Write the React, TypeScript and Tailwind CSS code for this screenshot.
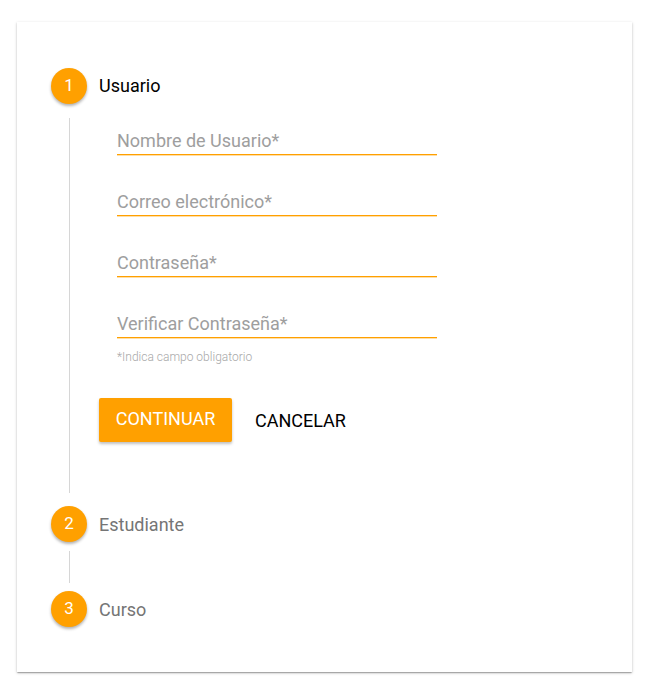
import React from 'react';

const orange = 'bg-[#ffa000]';

const StepCircle: React.FC<{ n: number }> = ({ n }) => (
  <div className={`w-9 h-9 rounded-full ${orange} text-white text-[17px] flex items-center justify-center shadow-[0_2px_3px_rgba(0,0,0,0.3)]`}>
    {n}
  </div>
);

const Field: React.FC<{ label: string; first?: boolean }> = ({ label, first }) => (
  <div
    className={`w-[320px] border-b border-[#ffa000] pb-[3px] text-[18px] leading-[20px] text-[#9e9e9e] shadow-[0_1px_0_rgba(255,160,0,0.35)] ${first ? '' : 'mt-[37px]'}`}
  >
    {label}
  </div>
);

const Stepper: React.FC = () => {
  return (
    <div className="w-[615px] h-[650px] ml-[17px] mt-[22px] bg-white pl-[34px] pt-[46px] shadow-[0_1px_3px_rgba(0,0,0,0.2),0_1px_1px_rgba(0,0,0,0.14),0_2px_1px_-1px_rgba(0,0,0,0.12)]">
      {/* Step 1 */}
      <div className="flex items-center">
        <StepCircle n={1} />
        <span className="ml-[12px] text-[18px] leading-[22px] text-black">Usuario</span>
      </div>
      <div className="flex mt-[14px]">
        <div className="w-9 flex justify-center">
          <div className="w-px bg-[#d6d6d6]" />
        </div>
        <div className="ml-[30px] pt-[13px] pb-[51px]">
          <Field label="Nombre de Usuario*" first />
          <Field label="Correo electrónico*" />
          <Field label="Contraseña*" />
          <Field label="Verificar Contraseña*" />
          <div className="mt-[12px] text-[12px] leading-[14px] font-light text-[#a8a8a8]">*Indica campo obligatorio</div>
          <div className="flex items-center -ml-[18px] mt-[34px]">
            <button className={`w-[133px] h-[44px] pb-[3px] ${orange} text-white text-[18px] rounded-[2px] shadow-[0_2px_3px_rgba(0,0,0,0.25)]`}>
              CONTINUAR
            </button>
            <button className="ml-[23px] text-[18px] text-black">CANCELAR</button>
          </div>
        </div>
      </div>

      {/* Step 2 */}
      <div className="flex items-center mt-[13px]">
        <StepCircle n={2} />
        <span className="ml-[12px] mt-[2px] text-[18px] leading-[22px] text-[#757575]">Estudiante</span>
      </div>
      <div className="w-9 flex justify-center mt-[9px] h-[32px]">
        <div className="w-px bg-[#d6d6d6]" />
      </div>

      {/* Step 3 */}
      <div className="flex items-center mt-[8px]">
        <StepCircle n={3} />
        <span className="ml-[12px] mt-[1px] text-[18px] leading-[22px] text-[#757575]">Curso</span>
      </div>
    </div>
  );
};

export default function App() {
  return (
    <div className="w-[650px] h-[694px] bg-white overflow-hidden" style={{ fontFamily: 'Roboto, "Liberation Sans", sans-serif' }}>
      <Stepper />
    </div>
  );
}
